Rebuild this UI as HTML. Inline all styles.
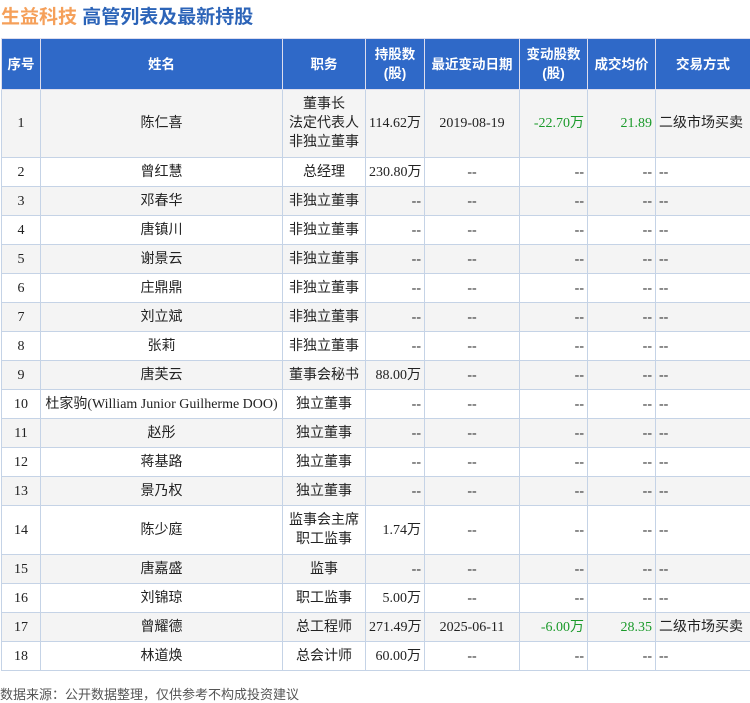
<!DOCTYPE html>
<html><head><meta charset="utf-8"><style>
body{margin:0;width:750px;height:702px;background:#fff;font-family:"Liberation Serif","Noto Sans CJK SC",serif;font-size:14px;color:#222;position:relative;overflow:hidden}
.t{position:absolute;left:1px;top:2px;font-family:"Liberation Sans","Noto Sans CJK SC",sans-serif;font-size:19px;font-weight:bold}
table{position:absolute;left:1px;top:38px;border-collapse:collapse;table-layout:fixed;width:749px}
td,th{border:1px solid #c5d3e6;padding:0 3px;overflow:hidden;white-space:nowrap;line-height:19px}
th{background:#2f69c8;color:#fff;font-family:"Liberation Sans","Noto Sans CJK SC",sans-serif;font-size:13.5px;font-weight:bold;height:50px;border-color:#dde;}
tr:nth-child(even) td{background:#f4f4f4}
td{height:28px}
.c{text-align:center}.r{text-align:right}.l{text-align:left}
.g{color:#1a9a2a}
.f{position:absolute;left:0px;top:684px;font-family:"Liberation Sans","Noto Sans CJK SC",sans-serif;font-size:13px;color:#555}
</style></head><body>
<div class="t"><span style="color:#f5a05a">生益科技</span> <span style="color:#2c64b8">高管列表及最新持股</span></div>
<table>
<colgroup><col style="width:39px"><col style="width:242px"><col style="width:83px"><col style="width:59px"><col style="width:95px"><col style="width:68px"><col style="width:68px"><col style="width:95px"></colgroup>
<tr><th>序号</th><th>姓名</th><th>职务</th><th>持股数<br>(股)</th><th>最近变动日期</th><th>变动股数<br>(股)</th><th>成交均价</th><th>交易方式</th></tr>
<tr><td class="c" style="height:67px">1</td><td class="c">陈仁喜</td><td class="c">董事长<br>法定代表人<br>非独立董事</td><td class="r">114.62万</td><td class="c">2019-08-19</td><td class="r g">-22.70万</td><td class="r g">21.89</td><td class="l">二级市场买卖</td></tr>
<tr><td class="c">2</td><td class="c">曾红慧</td><td class="c">总经理</td><td class="r">230.80万</td><td class="c">--</td><td class="r">--</td><td class="r">--</td><td class="l">--</td></tr>
<tr><td class="c">3</td><td class="c">邓春华</td><td class="c">非独立董事</td><td class="r">--</td><td class="c">--</td><td class="r">--</td><td class="r">--</td><td class="l">--</td></tr>
<tr><td class="c">4</td><td class="c">唐镇川</td><td class="c">非独立董事</td><td class="r">--</td><td class="c">--</td><td class="r">--</td><td class="r">--</td><td class="l">--</td></tr>
<tr><td class="c">5</td><td class="c">谢景云</td><td class="c">非独立董事</td><td class="r">--</td><td class="c">--</td><td class="r">--</td><td class="r">--</td><td class="l">--</td></tr>
<tr><td class="c">6</td><td class="c">庄鼎鼎</td><td class="c">非独立董事</td><td class="r">--</td><td class="c">--</td><td class="r">--</td><td class="r">--</td><td class="l">--</td></tr>
<tr><td class="c">7</td><td class="c">刘立斌</td><td class="c">非独立董事</td><td class="r">--</td><td class="c">--</td><td class="r">--</td><td class="r">--</td><td class="l">--</td></tr>
<tr><td class="c">8</td><td class="c">张莉</td><td class="c">非独立董事</td><td class="r">--</td><td class="c">--</td><td class="r">--</td><td class="r">--</td><td class="l">--</td></tr>
<tr><td class="c">9</td><td class="c">唐芙云</td><td class="c">董事会秘书</td><td class="r">88.00万</td><td class="c">--</td><td class="r">--</td><td class="r">--</td><td class="l">--</td></tr>
<tr><td class="c">10</td><td class="c" style="padding:0">杜家驹(William Junior Guilherme DOO)</td><td class="c">独立董事</td><td class="r">--</td><td class="c">--</td><td class="r">--</td><td class="r">--</td><td class="l">--</td></tr>
<tr><td class="c">11</td><td class="c">赵彤</td><td class="c">独立董事</td><td class="r">--</td><td class="c">--</td><td class="r">--</td><td class="r">--</td><td class="l">--</td></tr>
<tr><td class="c">12</td><td class="c">蒋基路</td><td class="c">独立董事</td><td class="r">--</td><td class="c">--</td><td class="r">--</td><td class="r">--</td><td class="l">--</td></tr>
<tr><td class="c">13</td><td class="c">景乃权</td><td class="c">独立董事</td><td class="r">--</td><td class="c">--</td><td class="r">--</td><td class="r">--</td><td class="l">--</td></tr>
<tr><td class="c" style="height:48px">14</td><td class="c">陈少庭</td><td class="c">监事会主席<br>职工监事</td><td class="r">1.74万</td><td class="c">--</td><td class="r">--</td><td class="r">--</td><td class="l">--</td></tr>
<tr><td class="c">15</td><td class="c">唐嘉盛</td><td class="c">监事</td><td class="r">--</td><td class="c">--</td><td class="r">--</td><td class="r">--</td><td class="l">--</td></tr>
<tr><td class="c">16</td><td class="c">刘锦琼</td><td class="c">职工监事</td><td class="r">5.00万</td><td class="c">--</td><td class="r">--</td><td class="r">--</td><td class="l">--</td></tr>
<tr><td class="c">17</td><td class="c">曾耀德</td><td class="c">总工程师</td><td class="r">271.49万</td><td class="c">2025-06-11</td><td class="r g">-6.00万</td><td class="r g">28.35</td><td class="l">二级市场买卖</td></tr>
<tr><td class="c">18</td><td class="c">林道焕</td><td class="c">总会计师</td><td class="r">60.00万</td><td class="c">--</td><td class="r">--</td><td class="r">--</td><td class="l">--</td></tr>
</table>
<div class="f">数据来源：公开数据整理，仅供参考不构成投资建议</div>
</body></html>
